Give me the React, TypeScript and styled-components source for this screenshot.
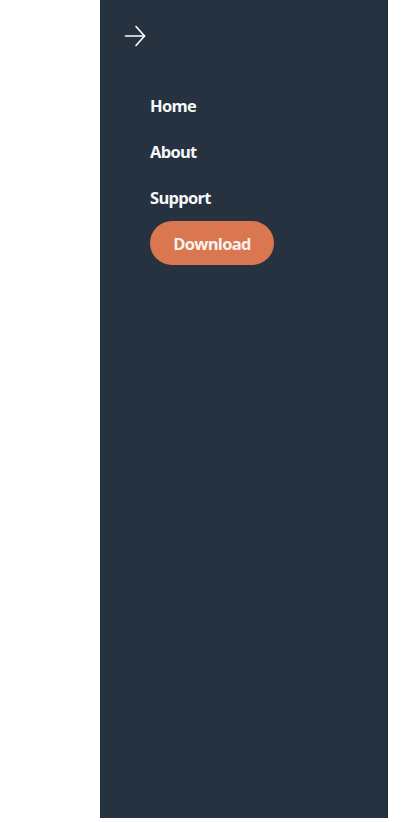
import React from 'react';
import styled, { createGlobalStyle } from 'styled-components';

const GlobalStyle = createGlobalStyle`
  html, body {
    margin: 0;
    padding: 0;
    background-color: #ffffff;
  }
  body {
    font-family: 'Open Sans', 'Noto Sans', sans-serif;
  }
`

const Page = styled.div`
    display: flex;
    padding-left: 100px;
    height: 822px;
`

const Sidebar = styled.aside`
    width: 286px;
    height: 818px;
    background-color: #273240;
    border-right: 2px solid #222c38;
    display: flex;
    flex-direction: column;
`

const Header = styled.div`
    height: 71px;
    display: flex;
    align-items: center;
    padding-left: 24px;
`

const ToggleBtn = styled.button`
    background: none;
    border: none;
    padding: 0;
    width: 22px;
    height: 22px;
    display: flex;
    cursor: pointer;
`

const NavList = styled.ul`
    list-style: none;
    margin: 0;
    padding: 11px 0 0 50px;
`

const NavItem = styled.li`
    height: 46px;
    display: flex;
    align-items: center;
`

const NavLink = styled.a`
    color: #f7f8f9;
    font-size: 16.5px;
    font-weight: 700;
    letter-spacing: -0.7px;
    text-decoration: none;
    cursor: pointer;
`

const DownloadBtn = styled.a`
    display: inline-flex;
    align-items: center;
    justify-content: center;
    height: 44px;
    width: 124px;
    border-radius: 22px;
    background-color: #da7650;
    color: #f9f2ee;
    font-size: 16.5px;
    font-weight: 700;
    letter-spacing: -0.7px;
    text-decoration: none;
    cursor: pointer;
`

const links = ['Home', 'About', 'Support'];

const App: React.FC = () => {
    return (
        <Page>
            <GlobalStyle />
            <Sidebar>
                <Header>
                    <ToggleBtn aria-label="Close menu">
                        <svg width="22" height="22" viewBox="0 0 22 22" fill="none" stroke="#ffffff" strokeWidth="1.6" strokeLinecap="round" strokeLinejoin="round">
                            <path d="M1.5 11H20.5" />
                            <path d="M12 1.5L20.5 11L12 20.5" />
                        </svg>
                    </ToggleBtn>
                </Header>
                <NavList>
                    {links.map(l => (
                        <NavItem key={l}><NavLink>{l}</NavLink></NavItem>
                    ))}
                    <NavItem><DownloadBtn>Download</DownloadBtn></NavItem>
                </NavList>
            </Sidebar>
        </Page>
    );
}

export default App;
